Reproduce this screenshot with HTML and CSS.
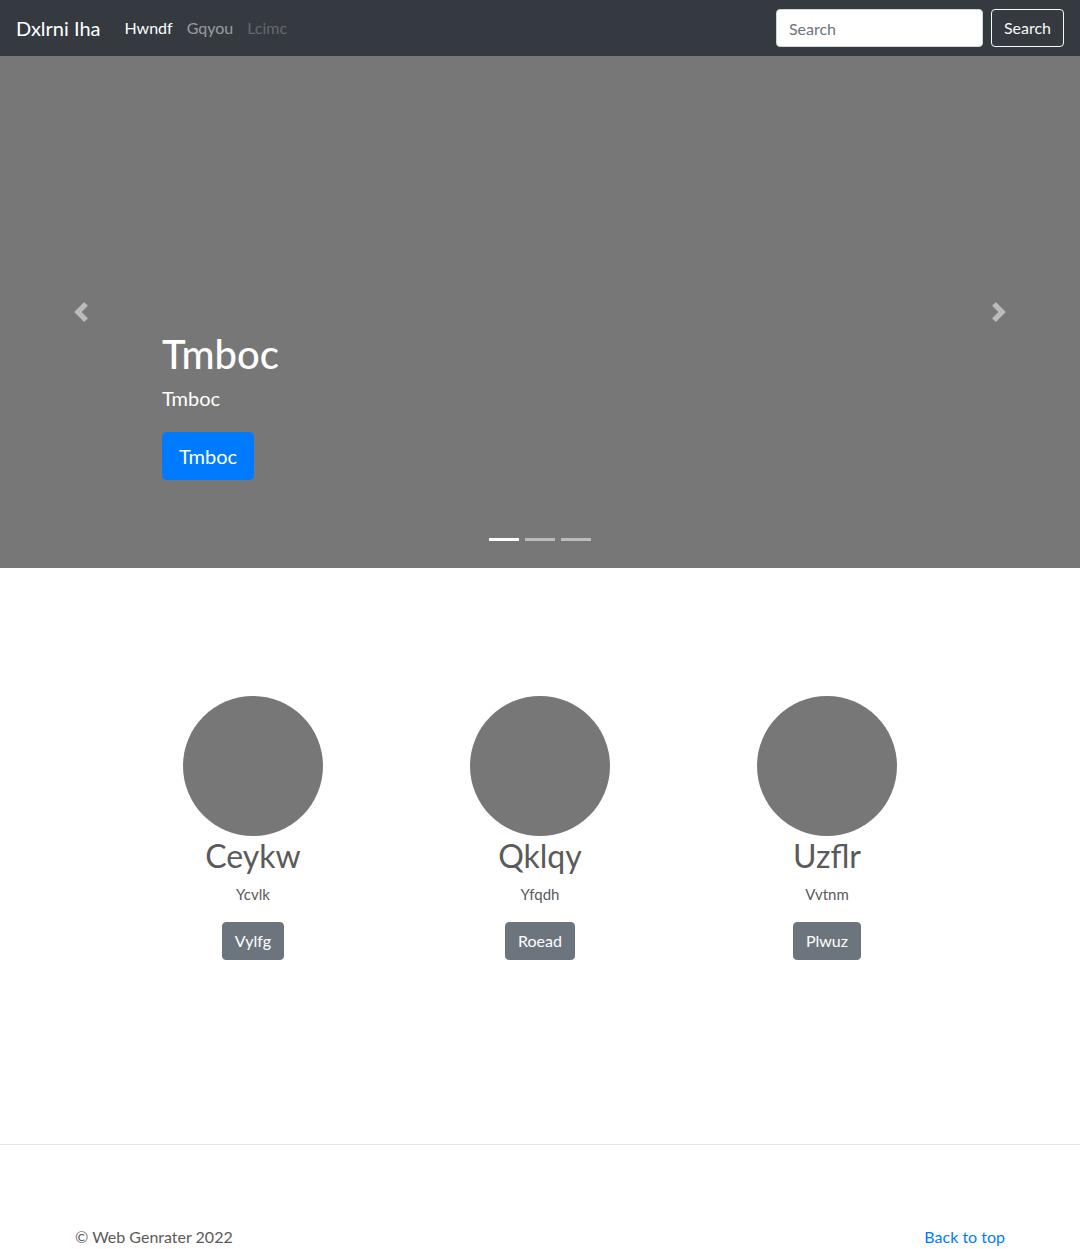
FILE: index.html
```html
<!DOCTYPE html>
<html lang="en">
<head>
<meta charset="utf-8">
<title>Dxlrni Iha</title>
<link rel="stylesheet" href="styles.css">
</head>
<body>
<header class="navbar">
  <a class="brand" href="#">Dxlrni Iha</a>
  <nav class="nav">
    <a class="nav-link active" href="#">Hwndf</a>
    <a class="nav-link" href="#">Gqyou</a>
    <a class="nav-link disabled" href="#">Lcimc</a>
  </nav>
  <form class="search">
    <input class="search-input" type="text" placeholder="Search">
    <button class="btn-outline" type="button">Search</button>
  </form>
</header>

<section class="carousel">
  <a class="control prev" href="#"><svg width="20" height="20" viewBox="0 0 8 8"><path d="M5.25 0l-4 4 4 4 1.5-1.5L4.25 4l2.5-2.5L5.25 0z" fill="#fff"/></svg></a>
  <a class="control next" href="#"><svg width="20" height="20" viewBox="0 0 8 8"><path d="M2.75 0l-1.5 1.5L3.75 4l-2.5 2.5L2.75 8l4-4-4-4z" fill="#fff"/></svg></a>
  <div class="caption">
    <h1 class="caption-title">Tmboc</h1>
    <p class="caption-text">Tmboc</p>
    <p class="caption-action"><a class="btn-primary" href="#">Tmboc</a></p>
  </div>
  <ol class="indicators">
    <li class="indicator on"></li>
    <li class="indicator"></li>
    <li class="indicator"></li>
  </ol>
</section>

<main class="marketing">
  <div class="feature">
    <div class="circle"></div>
    <h2 class="feature-title">Ceykw</h2>
    <p class="feature-text">Ycvlk</p>
    <a class="btn-secondary" href="#">Vylfg</a>
  </div>
  <div class="feature">
    <div class="circle"></div>
    <h2 class="feature-title">Qklqy</h2>
    <p class="feature-text">Yfqdh</p>
    <a class="btn-secondary" href="#">Roead</a>
  </div>
  <div class="feature">
    <div class="circle"></div>
    <h2 class="feature-title">Uzflr</h2>
    <p class="feature-text">Vvtnm</p>
    <a class="btn-secondary" href="#">Plwuz</a>
  </div>
</main>

<hr class="divider">

<footer class="footer">
  <p class="copy">© Web Genrater 2022</p>
  <a class="top-link" href="#">Back to top</a>
</footer>
</body>
</html>
```

FILE: styles.css
```css
* { box-sizing: border-box; }
html, body { margin: 0; padding: 0; }
body {
  font-family: Lato, "Open Sans", "Noto Sans", sans-serif;
  font-size: 16px;
  line-height: 1.5;
  color: #5a5a5a;
  background: #fff;
}
a { text-decoration: none; }

.navbar {
  height: 56px;
  background: #343a40;
  display: flex;
  align-items: center;
  padding: 0 16px;
}
.brand {
  color: #fff;
  font-size: 20px;
  line-height: 30px;
  margin-right: 16px;
}
.nav { display: flex; flex: 1; }
.nav-link {
  color: rgba(255,255,255,.5);
  padding: 8px 7px;
  line-height: 24px;
}
.nav-link:first-child { padding-left: 8px; }
.nav-link.active { color: #fff; }
.nav-link.disabled { color: rgba(255,255,255,.25); }
.search { display: flex; align-items: center; }
.search-input {
  width: 207px;
  height: 38px;
  border: 1px solid #ced4da;
  border-radius: 4px;
  padding: 6px 12px;
  font: inherit;
  color: #495057;
  margin-right: 8px;
  background: #fff;
}
.search-input::placeholder { color: #6c757d; }
.btn-outline {
  height: 38px;
  border: 1px solid #f8f9fa;
  border-radius: 4px;
  background: transparent;
  color: #f8f9fa;
  font: inherit;
  padding: 6px 12px;
}

.carousel {
  position: relative;
  height: 512px;
  background: #777;
  display: flex;
  flex-direction: column;
  justify-content: flex-end;
}
.control {
  position: absolute;
  top: 0;
  bottom: 0;
  width: 15%;
  display: flex;
  align-items: center;
  justify-content: center;
  opacity: .5;
}
.control.prev { left: 0; }
.control.next { right: 0; }
.caption {
  margin: 0 15% 52px;
  padding-bottom: 20px;
  color: #fff;
}
.caption-title {
  font-size: 40px;
  font-weight: 500;
  line-height: 1.2;
  margin: 0 0 5px;
}
.caption-text {
  font-size: 20px;
  line-height: 30px;
  margin: 0 0 19px;
}
.caption-action { margin: 0 0 16px; }
.btn-primary {
  display: inline-block;
  background: #007bff;
  color: #fff;
  font-size: 20px;
  line-height: 30px;
  padding: 9px 17px;
  border-radius: 4.8px;
}
.indicators {
  position: absolute;
  left: 0;
  right: 0;
  bottom: 27px;
  margin: 0;
  padding: 0;
  list-style: none;
  display: flex;
  justify-content: center;
  gap: 6px;
}
.indicator {
  width: 30px;
  height: 3px;
  background: #fff;
  opacity: .5;
}
.indicator.on { opacity: 1; }

.marketing {
  width: 861px;
  margin: 128px auto 0;
  display: grid;
  grid-template-columns: repeat(3, 1fr);
  text-align: center;
}
.feature {
  display: flex;
  flex-direction: column;
  align-items: center;
}
.circle {
  width: 140px;
  height: 140px;
  border-radius: 50%;
  background: #777;
}
.feature-title {
  font-size: 32px;
  font-weight: 400;
  line-height: 1.2;
  margin: 1px 0 8px;
}
.feature-text {
  font-size: 15px;
  margin: 0 0 16px;
}
.btn-secondary {
  display: inline-block;
  background: #6c757d;
  border: 1px solid #6c757d;
  color: #fff;
  padding: 6px 12px;
  line-height: 24px;
  border-radius: 4px;
}

.divider {
  margin: 184px 0 0;
  border: 0;
  border-top: 1px solid rgba(0,0,0,.1);
}
.footer {
  width: 930px;
  margin: 0 auto;
  padding-top: 80px;
  display: flex;
  justify-content: space-between;
  align-items: center;
}
.copy { margin: 0; color: #5a5a5a; }
.top-link { color: #007bff; }
```
